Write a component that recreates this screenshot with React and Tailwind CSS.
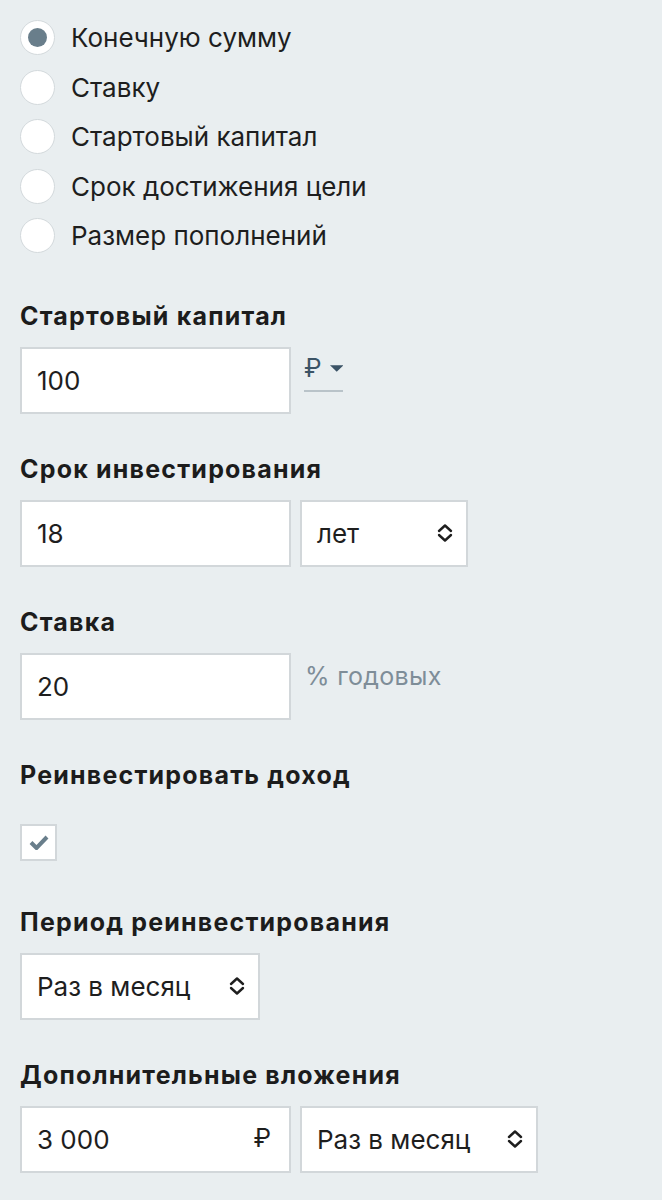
import React from "react";

const font = { fontFamily: "Inter, 'Noto Sans', sans-serif" };

function Radio({ checked, label }) {
  return (
    <div className="flex items-center h-[49.5px]">
      <div className="w-[35px] h-[35px] rounded-full bg-white border border-[#d3d9dc] flex items-center justify-center shrink-0">
        {checked && <div className="w-[19px] h-[19px] rounded-full bg-[#697e8b]" />}
      </div>
      <span className="ml-[16px] text-[26px] text-[#1e1e1e]">{label}</span>
    </div>
  );
}

function Chevrons() {
  return (
    <svg width="18" height="20" viewBox="0 0 18 20" fill="none" stroke="#1e1e1e" strokeWidth="2.4" strokeLinecap="round" strokeLinejoin="round">
      <path d="M3 8 L9 2.5 L15 8" />
      <path d="M3 12 L9 17.5 L15 12" />
    </svg>
  );
}

function Input({ value, w = "w-[271px]", suffix }) {
  return (
    <div className={`${w} h-[67px] bg-white border-2 border-[#d2d7da] flex items-center pl-[15px] pr-[18px] shrink-0`}>
      <span className="text-[26px] text-[#1e1e1e] flex-1">{value}</span>
      {suffix}
    </div>
  );
}

function Select({ value, w }) {
  return (
    <div className={`${w} pr-[12px] h-[67px] bg-white border-2 border-[#d2d7da] flex items-center pl-[15px] shrink-0`}>
      <span className="text-[26px] text-[#1e1e1e] flex-1">{value}</span>
      <Chevrons />
    </div>
  );
}

function Heading({ children, className = "" }) {
  return <div className={`text-[25px] font-bold text-[#1c1c1c] leading-none tracking-[1.2px] ${className}`}>{children}</div>;
}

export default function App() {
  return (
    <div style={font} className="w-[662px] h-[1200px] bg-[#e9eef0] pl-[20px] pt-[13px] overflow-hidden">
      <div className="flex flex-col">
        <Radio checked label="Конечную сумму" />
        <Radio label="Ставку" />
        <Radio label="Стартовый капитал" />
        <Radio label="Срок достижения цели" />
        <Radio label="Размер пополнений" />
      </div>

      <Heading className="mt-[43px]">Стартовый капитал</Heading>
      <div className="flex mt-[18px] items-start">
        <Input value="100" />
        <div className="ml-[13px] mt-[9px] flex flex-col w-[39px]">
          <div className="flex items-center gap-[8px] text-[#3b5366]">
            <span className="text-[25px] leading-none">₽</span>
            <svg width="15" height="7" viewBox="0 0 15 7"><path d="M0 0 L15 0 L7.5 7 Z" fill="#3b5366" /></svg>
          </div>
          <div className="h-[2px] bg-[#b9c3c9] mt-[9px]" />
        </div>
      </div>

      <Heading className="mt-[43px]">Срок инвестирования</Heading>
      <div className="flex mt-[18px] gap-[9px]">
        <Input value="18" />
        <Select value="лет" w="w-[168px]" />
      </div>

      <Heading className="mt-[43px]">Ставка</Heading>
      <div className="flex mt-[18px] items-start">
        <Input value="20" />
        <span className="ml-[14px] mt-[11px] text-[25px] text-[#7e8d98] leading-none tracking-[0.3px]">% годовых</span>
      </div>

      <Heading className="mt-[43px]">Реинвестировать доход</Heading>
      <div className="mt-[36px] w-[37px] h-[37px] bg-white border-2 border-[#d2d7da] flex items-center justify-center">
        <svg width="20" height="16" viewBox="0 0 20 16"><path d="M2 8.5 L7.5 14 L18 3" fill="none" stroke="#697e8b" strokeWidth="4" strokeLinejoin="miter" /></svg>
      </div>

      <Heading className="mt-[49px]">Период реинвестирования</Heading>
      <div className="flex mt-[18px]">
        <Select value="Раз в месяц" w="w-[240px]" />
      </div>

      <Heading className="mt-[43px]">Дополнительные вложения</Heading>
      <div className="flex mt-[18px] gap-[9px]">
        <Input value="3 000" suffix={<span className="text-[25px] text-[#1e1e1e]">₽</span>} />
        <Select value="Раз в месяц" w="w-[238px]" />
      </div>
    </div>
  );
}
